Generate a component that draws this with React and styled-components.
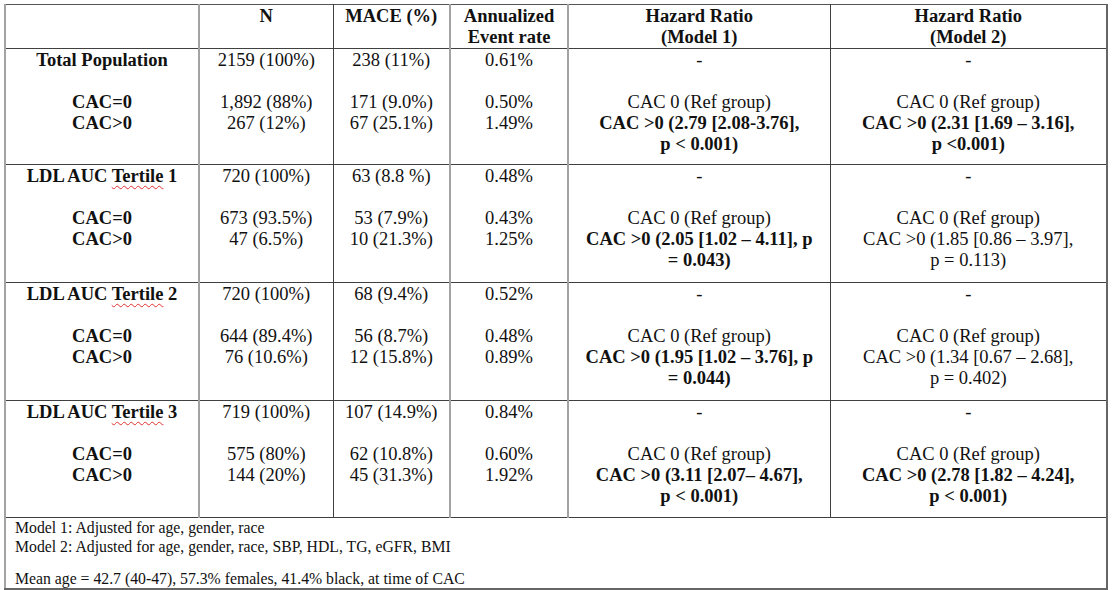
import React from 'react';
import styled, { createGlobalStyle } from 'styled-components';

const GlobalStyle = createGlobalStyle`
  html, body {
    margin: 0;
    padding: 0;
    background: #fff;
  }
  body {
    font-family: "Liberation Serif", "Times New Roman", serif;
    color: #111;
  }
`;

const Page = styled.div`
  padding: 4px 0 0 4px;
`;

const Table = styled.table`
  border-collapse: collapse;
  table-layout: fixed;
  width: 1102px;
  font-size: 18.5px;
  line-height: 21px;
  border-top: 1px solid #555;
  border-left: 2px solid #a3a3a3;
  border-right: 2px solid #666;
  border-bottom: 2px solid #666;
`;

const HeadRow = styled.tr`
  height: 44px;
  border-bottom: 1px solid #404040;
`;

const GroupRow = styled.tr`
  height: ${p => p.$h}px;
  border-bottom: 1px solid #404040;
`;

const Cell = styled.td`
  vertical-align: top;
  text-align: center;
  padding: 1px 4px 0;
  font-weight: ${p => (p.$head ? 700 : 400)};
  border-right: ${p => (p.$soft ? '2px solid #a3a3a3' : '1px solid #404040')};
`;

const Line = styled.div`
  min-height: 21px;
  font-weight: ${p => (p.$bold ? 700 : 'inherit')};
  white-space: nowrap;
`;

const Spell = styled.span`
  text-decoration: underline wavy #e03030;
  text-decoration-thickness: 1px;
  text-underline-offset: 3px;
`;

const NoteCell = styled.td`
  vertical-align: top;
  text-align: left;
  padding: 0 0 0 9px;
  font-size: 15.75px;
  line-height: 19px;
`;

const NoteLine = styled.div`
  min-height: ${p => (p.$gap ? 13 : 19)}px;
  white-space: nowrap;
`;

// which column lines are the pale, thicker ones
const soft = [true, false, true, true, false, false];
const widths = [194, 134, 117, 118, 262, 277];

const groups = [
  {
    label: 'Total Population',
    h: 116,
    n: '2159 (100%)', mace: '238 (11%)', rate: '0.61%',
    sub: [
      ['CAC=0', '1,892 (88%)', '171 (9.0%)', '0.50%'],
      ['CAC>0', '267 (12%)', '67 (25.1%)', '1.49%'],
    ],
    hr1: { bold: true, lines: ['CAC >0 (2.79 [2.08-3.76],', 'p < 0.001)'] },
    hr2: { bold: true, lines: ['CAC >0 (2.31 [1.69 – 3.16],', 'p <0.001)'] },
  },
  {
    tertile: 1,
    h: 118,
    n: '720 (100%)', mace: '63 (8.8 %)', rate: '0.48%',
    sub: [
      ['CAC=0', '673 (93.5%)', '53 (7.9%)', '0.43%'],
      ['CAC>0', '47 (6.5%)', '10 (21.3%)', '1.25%'],
    ],
    hr1: { bold: true, lines: ['CAC >0 (2.05 [1.02 – 4.11], p', '= 0.043)'] },
    hr2: { bold: false, lines: ['CAC >0 (1.85 [0.86 – 3.97],', 'p = 0.113)'] },
  },
  {
    tertile: 2,
    h: 118,
    n: '720 (100%)', mace: '68 (9.4%)', rate: '0.52%',
    sub: [
      ['CAC=0', '644 (89.4%)', '56 (8.7%)', '0.48%'],
      ['CAC>0', '76 (10.6%)', '12 (15.8%)', '0.89%'],
    ],
    hr1: { bold: true, lines: ['CAC >0 (1.95 [1.02 – 3.76], p', '= 0.044)'] },
    hr2: { bold: false, lines: ['CAC >0 (1.34 [0.67 – 2.68],', 'p = 0.402)'] },
  },
  {
    tertile: 3,
    h: 117,
    n: '719 (100%)', mace: '107 (14.9%)', rate: '0.84%',
    sub: [
      ['CAC=0', '575 (80%)', '62 (10.8%)', '0.60%'],
      ['CAC>0', '144 (20%)', '45 (31.3%)', '1.92%'],
    ],
    hr1: { bold: true, lines: ['CAC >0 (3.11 [2.07– 4.67],', 'p < 0.001)'] },
    hr2: { bold: true, lines: ['CAC >0 (2.78 [1.82 – 4.24],', 'p < 0.001)'] },
  },
];

const Stack = ({ first, rest, bold }) => (
  <>
    <Line $bold={bold}>{first}</Line>
    <Line />
    {rest.map((t, i) => (
      <Line key={i} $bold={bold}>{t}</Line>
    ))}
  </>
);

const Hazard = ({ hr }) => (
  <>
    <Line>-</Line>
    <Line />
    <Line>CAC 0 (Ref group)</Line>
    {hr.lines.map((t, i) => (
      <Line key={i} $bold={hr.bold}>{t}</Line>
    ))}
  </>
);

const App = () => {
  const headers = [
    [''],
    ['N'],
    ['MACE (%)'],
    ['Annualized', 'Event rate'],
    ['Hazard Ratio', '(Model 1)'],
    ['Hazard Ratio', '(Model 2)'],
  ];

  return (
    <Page>
      <GlobalStyle />
      <Table>
        <colgroup>
          {widths.map((w, i) => (
            <col key={i} style={{ width: w }} />
          ))}
        </colgroup>
        <thead>
          <HeadRow>
            {headers.map((lines, i) => (
              <Cell key={i} $head $soft={soft[i]}>
                {lines.map((t, j) => (
                  <Line key={j}>{t}</Line>
                ))}
              </Cell>
            ))}
          </HeadRow>
        </thead>
        <tbody>
          {groups.map((g, gi) => (
            <GroupRow key={gi} $h={g.h}>
              <Cell $soft={soft[0]}>
                <Stack
                  bold
                  first={
                    g.tertile ? (
                      <>LDL AUC <Spell>Tertile</Spell> {g.tertile}</>
                    ) : (
                      g.label
                    )
                  }
                  rest={g.sub.map(s => s[0])}
                />
              </Cell>
              <Cell $soft={soft[1]}>
                <Stack first={g.n} rest={g.sub.map(s => s[1])} />
              </Cell>
              <Cell $soft={soft[2]}>
                <Stack first={g.mace} rest={g.sub.map(s => s[2])} />
              </Cell>
              <Cell $soft={soft[3]}>
                <Stack first={g.rate} rest={g.sub.map(s => s[3])} />
              </Cell>
              <Cell $soft={soft[4]}>
                <Hazard hr={g.hr1} />
              </Cell>
              <Cell $soft={soft[5]}>
                <Hazard hr={g.hr2} />
              </Cell>
            </GroupRow>
          ))}
          <tr>
            <NoteCell colSpan={6}>
              <NoteLine>Model 1: Adjusted for age, gender, race</NoteLine>
              <NoteLine>Model 2: Adjusted for age, gender, race, SBP, HDL, TG, eGFR, BMI</NoteLine>
              <NoteLine $gap />
              <NoteLine>Mean age = 42.7 (40-47), 57.3% females, 41.4% black, at time of CAC</NoteLine>
            </NoteCell>
          </tr>
        </tbody>
      </Table>
    </Page>
  );
};

export default App;
